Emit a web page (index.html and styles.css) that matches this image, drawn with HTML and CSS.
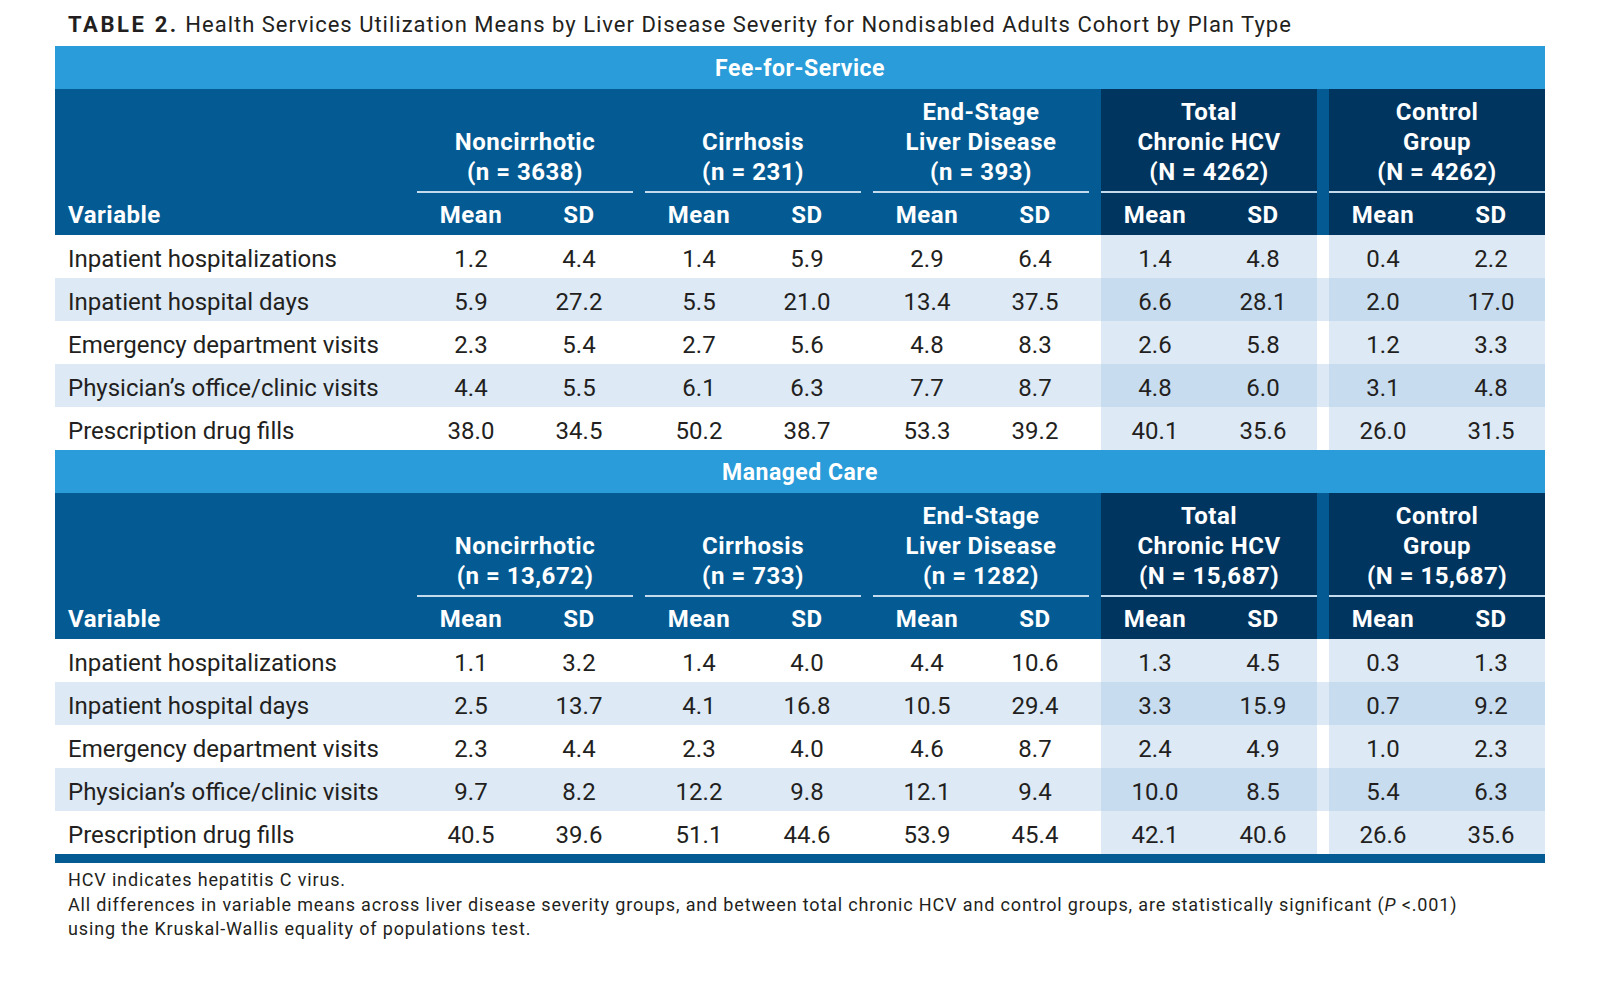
FILE: index.html
```html
<!DOCTYPE html>
<html lang="en">
<head>
<meta charset="utf-8">
<title>Table 2</title>
<link rel="stylesheet" href="styles.css">
</head>
<body>
<div class="page">
  <h1 class="caption"><span class="label">TABLE 2.</span> Health Services Utilization Means by Liver Disease Severity for Nondisabled Adults Cohort by Plan Type</h1>

  <div class="table">
    <div class="band">Fee-for-Service</div>
    <div class="head">
      <div class="var-head">Variable</div>
      <div class="grp"><div class="gt">Noncirrhotic<br>(n = 3638)</div><div class="sub"><span>Mean</span><span>SD</span></div></div>
      <div class="gap"></div>
      <div class="grp"><div class="gt">Cirrhosis<br>(n = 231)</div><div class="sub"><span>Mean</span><span>SD</span></div></div>
      <div class="gap"></div>
      <div class="grp"><div class="gt">End-Stage<br>Liver Disease<br>(n = 393)</div><div class="sub"><span>Mean</span><span>SD</span></div></div>
      <div class="gap"></div>
      <div class="grp dark"><div class="gt">Total<br>Chronic HCV<br>(N = 4262)</div><div class="sub"><span>Mean</span><span>SD</span></div></div>
      <div class="gap"></div>
      <div class="grp dark"><div class="gt">Control<br>Group<br>(N = 4262)</div><div class="sub"><span>Mean</span><span>SD</span></div></div>
    </div>
    <div class="row"><div class="var">Inpatient hospitalizations</div><div class="cells"><span>1.2</span><span>4.4</span></div><div class="gap"></div><div class="cells"><span>1.4</span><span>5.9</span></div><div class="gap"></div><div class="cells"><span>2.9</span><span>6.4</span></div><div class="gap"></div><div class="cells hl"><span>1.4</span><span>4.8</span></div><div class="gap"></div><div class="cells hl"><span>0.4</span><span>2.2</span></div></div>
    <div class="row alt"><div class="var">Inpatient hospital days</div><div class="cells"><span>5.9</span><span>27.2</span></div><div class="gap"></div><div class="cells"><span>5.5</span><span>21.0</span></div><div class="gap"></div><div class="cells"><span>13.4</span><span>37.5</span></div><div class="gap"></div><div class="cells hl"><span>6.6</span><span>28.1</span></div><div class="gap"></div><div class="cells hl"><span>2.0</span><span>17.0</span></div></div>
    <div class="row"><div class="var">Emergency department visits</div><div class="cells"><span>2.3</span><span>5.4</span></div><div class="gap"></div><div class="cells"><span>2.7</span><span>5.6</span></div><div class="gap"></div><div class="cells"><span>4.8</span><span>8.3</span></div><div class="gap"></div><div class="cells hl"><span>2.6</span><span>5.8</span></div><div class="gap"></div><div class="cells hl"><span>1.2</span><span>3.3</span></div></div>
    <div class="row alt"><div class="var">Physician’s office/clinic visits</div><div class="cells"><span>4.4</span><span>5.5</span></div><div class="gap"></div><div class="cells"><span>6.1</span><span>6.3</span></div><div class="gap"></div><div class="cells"><span>7.7</span><span>8.7</span></div><div class="gap"></div><div class="cells hl"><span>4.8</span><span>6.0</span></div><div class="gap"></div><div class="cells hl"><span>3.1</span><span>4.8</span></div></div>
    <div class="row"><div class="var">Prescription drug fills</div><div class="cells"><span>38.0</span><span>34.5</span></div><div class="gap"></div><div class="cells"><span>50.2</span><span>38.7</span></div><div class="gap"></div><div class="cells"><span>53.3</span><span>39.2</span></div><div class="gap"></div><div class="cells hl"><span>40.1</span><span>35.6</span></div><div class="gap"></div><div class="cells hl"><span>26.0</span><span>31.5</span></div></div>

    <div class="band">Managed Care</div>
    <div class="head">
      <div class="var-head">Variable</div>
      <div class="grp"><div class="gt">Noncirrhotic<br>(n = 13,672)</div><div class="sub"><span>Mean</span><span>SD</span></div></div>
      <div class="gap"></div>
      <div class="grp"><div class="gt">Cirrhosis<br>(n = 733)</div><div class="sub"><span>Mean</span><span>SD</span></div></div>
      <div class="gap"></div>
      <div class="grp"><div class="gt">End-Stage<br>Liver Disease<br>(n = 1282)</div><div class="sub"><span>Mean</span><span>SD</span></div></div>
      <div class="gap"></div>
      <div class="grp dark"><div class="gt">Total<br>Chronic HCV<br>(N = 15,687)</div><div class="sub"><span>Mean</span><span>SD</span></div></div>
      <div class="gap"></div>
      <div class="grp dark"><div class="gt">Control<br>Group<br>(N = 15,687)</div><div class="sub"><span>Mean</span><span>SD</span></div></div>
    </div>
    <div class="row"><div class="var">Inpatient hospitalizations</div><div class="cells"><span>1.1</span><span>3.2</span></div><div class="gap"></div><div class="cells"><span>1.4</span><span>4.0</span></div><div class="gap"></div><div class="cells"><span>4.4</span><span>10.6</span></div><div class="gap"></div><div class="cells hl"><span>1.3</span><span>4.5</span></div><div class="gap"></div><div class="cells hl"><span>0.3</span><span>1.3</span></div></div>
    <div class="row alt"><div class="var">Inpatient hospital days</div><div class="cells"><span>2.5</span><span>13.7</span></div><div class="gap"></div><div class="cells"><span>4.1</span><span>16.8</span></div><div class="gap"></div><div class="cells"><span>10.5</span><span>29.4</span></div><div class="gap"></div><div class="cells hl"><span>3.3</span><span>15.9</span></div><div class="gap"></div><div class="cells hl"><span>0.7</span><span>9.2</span></div></div>
    <div class="row"><div class="var">Emergency department visits</div><div class="cells"><span>2.3</span><span>4.4</span></div><div class="gap"></div><div class="cells"><span>2.3</span><span>4.0</span></div><div class="gap"></div><div class="cells"><span>4.6</span><span>8.7</span></div><div class="gap"></div><div class="cells hl"><span>2.4</span><span>4.9</span></div><div class="gap"></div><div class="cells hl"><span>1.0</span><span>2.3</span></div></div>
    <div class="row alt"><div class="var">Physician’s office/clinic visits</div><div class="cells"><span>9.7</span><span>8.2</span></div><div class="gap"></div><div class="cells"><span>12.2</span><span>9.8</span></div><div class="gap"></div><div class="cells"><span>12.1</span><span>9.4</span></div><div class="gap"></div><div class="cells hl"><span>10.0</span><span>8.5</span></div><div class="gap"></div><div class="cells hl"><span>5.4</span><span>6.3</span></div></div>
    <div class="row"><div class="var">Prescription drug fills</div><div class="cells"><span>40.5</span><span>39.6</span></div><div class="gap"></div><div class="cells"><span>51.1</span><span>44.6</span></div><div class="gap"></div><div class="cells"><span>53.9</span><span>45.4</span></div><div class="gap"></div><div class="cells hl"><span>42.1</span><span>40.6</span></div><div class="gap"></div><div class="cells hl"><span>26.6</span><span>35.6</span></div></div>
    <div class="bottom-bar"></div>
  </div>

  <div class="notes">
    <p>HCV indicates hepatitis C virus.</p>
    <p>All differences in variable means across liver disease severity groups, and between total chronic HCV and control groups, are statistically significant (<i>P</i> &lt;.001)<br>using the Kruskal-Wallis equality of populations test.</p>
  </div>
</div>
</body>
</html>
```

FILE: styles.css
```css
*, *::before, *::after {
  box-sizing: border-box;
}

html, body {
  margin: 0;
  padding: 0;
  background: #ffffff;
}

.page {
  width: 1545px;
  padding-left: 55px;
  font-family: Roboto, "Liberation Sans", sans-serif;
  color: #231f20;
}

.caption {
  margin: 0;
  height: 46px;
  padding: 4px 0 0 13px;
  font-size: 22px;
  line-height: 42px;
  font-weight: 400;
  letter-spacing: 1px;
  white-space: nowrap;
  color: #231f20;
}

.caption .label {
  font-weight: 700;
  letter-spacing: 2.6px;
}

.table {
  display: flex;
  flex-direction: column;
}

.band {
  height: 43px;
  padding-top: 2px;
  background: #299cd9;
  color: #ffffff;
  font-weight: 700;
  font-size: 23px;
  display: flex;
  align-items: center;
  justify-content: center;
  letter-spacing: 0.5px;
}

.head,
.row {
  display: grid;
  grid-template-columns: 362px 216px 12px 216px 12px 216px 12px 216px 12px 216px;
}

.head {
  height: 146px;
  background: #045b93;
  color: #ffffff;
  font-weight: 700;
  font-size: 24px;
  letter-spacing: 0.5px;
}

.var-head {
  align-self: end;
  height: 42px;
  padding: 2px 0 0 13px;
  display: flex;
  align-items: center;
}

.grp {
  display: flex;
  flex-direction: column;
}

.grp.dark {
  background: #00355f;
}

.gt {
  flex: 1;
  display: flex;
  flex-direction: column;
  justify-content: flex-end;
  text-align: center;
  line-height: 30px;
  padding-bottom: 4px;
  border-bottom: 2px solid #c4dbee;
}

.sub {
  height: 42px;
  padding-top: 2px;
  display: grid;
  grid-template-columns: 1fr 1fr;
  align-items: center;
  text-align: center;
}

.row {
  height: 43px;
  background: #ffffff;
  font-size: 24px;
}

.row.alt {
  background: #dde9f5;
}

.var {
  display: flex;
  align-items: center;
  padding: 4px 0 0 13px;
  white-space: nowrap;
}

.cells {
  display: grid;
  grid-template-columns: 1fr 1fr;
  align-items: center;
  text-align: center;
  padding-top: 4px;
}

.cells.hl {
  background: #dde9f5;
}

.row.alt .cells.hl {
  background: #c8dcef;
}

.bottom-bar {
  height: 9px;
  background: #045b93;
}

.notes {
  padding: 5px 0 0 13px;
  font-size: 18px;
  line-height: 24.5px;
  letter-spacing: 0.85px;
}

.notes p {
  margin: 0;
}
```
